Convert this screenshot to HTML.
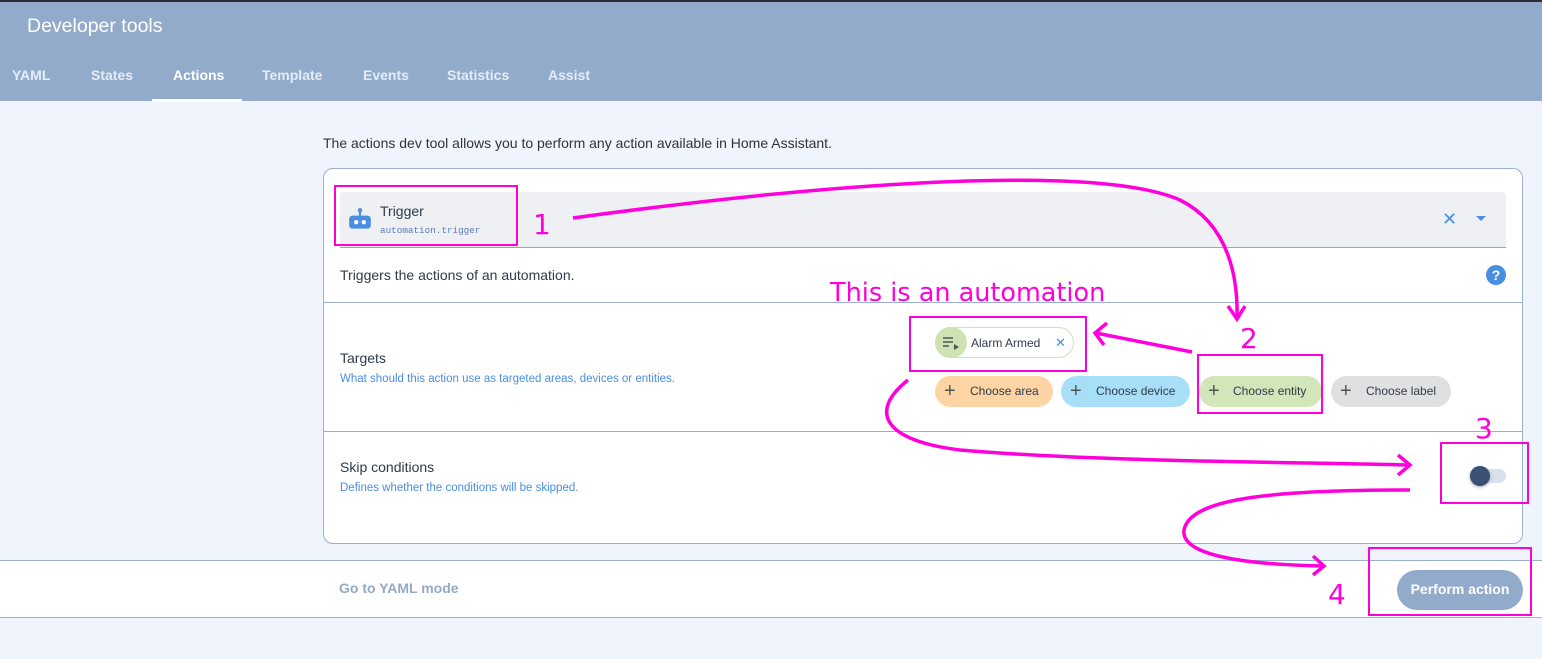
<!DOCTYPE html>
<html><head><meta charset="utf-8"><style>
*{margin:0;padding:0;box-sizing:border-box}
body{width:1542px;height:659px;position:relative;overflow:hidden;background:#eff4fd;font-family:"Liberation Sans",sans-serif;color:#2f3b4a}
.a{position:absolute;white-space:nowrap}
.hdr{position:absolute;left:0;top:0;width:1542px;height:101px;background:#92abcb;border-top:2px solid #2c2c33}
.tab{position:absolute;top:67px;font-size:14px;font-weight:bold;color:#e4ecf7}
.chip{position:absolute;height:31px;border-radius:16px;font-size:12px;color:#2f3b4a;line-height:31px}
.chip .p{position:absolute;left:9px;top:0;font-size:20px;color:#555;font-weight:normal}
</style></head><body>
<div class="hdr"></div>
<div class="a" style="left:27px;top:15px;font-size:19.5px;color:#fff">Developer tools</div>
<div class="tab" style="left:12px">YAML</div>
<div class="tab" style="left:91px">States</div>
<div class="tab" style="left:173px;color:#fff">Actions</div>
<div class="tab" style="left:262px">Template</div>
<div class="tab" style="left:363px">Events</div>
<div class="tab" style="left:447px">Statistics</div>
<div class="tab" style="left:548px">Assist</div>
<div class="a" style="left:152px;top:99px;width:90px;height:3px;background:#fff"></div>

<div class="a" style="left:323px;top:135px;font-size:14px;color:#333">The actions dev tool allows you to perform any action available in Home Assistant.</div>

<div class="a" style="left:323px;top:168px;width:1200px;height:376px;background:#fff;border:1px solid #9ab0cf;border-radius:10px"></div>
<div class="a" style="left:340px;top:192px;width:1166px;height:56px;background:#eef0f4;border-bottom:1px solid #8fa8c8;border-radius:4px 4px 0 0"></div>
<svg class="a" style="left:347px;top:207px" width="26" height="26" viewBox="0 0 24 24"><circle cx="12" cy="3" r="2" fill="#4a8ee0"/><rect x="11" y="3" width="2" height="5" fill="#4a8ee0"/><path d="M5 8h14a3 3 0 0 1 3 3v6a3 3 0 0 1-3 3H5a3 3 0 0 1-3-3v-6a3 3 0 0 1 3-3z" fill="#4a8ee0"/><circle cx="8.5" cy="14" r="2" fill="#fff"/><circle cx="15.5" cy="14" r="2" fill="#fff"/></svg>
<div class="a" style="left:380px;top:203px;font-size:14px">Trigger</div>
<div class="a" style="left:380px;top:225px;font-size:9.3px;font-family:'Liberation Mono',monospace;color:#5b7bb8">automation.trigger</div>
<div class="a" style="left:1442px;top:209px;font-size:18px;color:#4a8ee0">✕</div>
<svg class="a" style="left:1476px;top:216px" width="10" height="6"><path d="M0 0h10L5 5z" fill="#4a8ee0"/></svg>
<div class="a" style="left:340px;top:267px;font-size:14px">Triggers the actions of an automation.</div>
<div class="a" style="left:1486px;top:265px;width:20px;height:20px;border-radius:50%;background:#4a8ee0;color:#fff;font-size:14px;font-weight:bold;text-align:center;line-height:20px">?</div>
<div class="a" style="left:324px;top:302px;width:1198px;height:1px;background:#9ab0cf"></div>
<div class="a" style="left:340px;top:350px;font-size:14px">Targets</div>
<div class="a" style="left:340px;top:373px;font-size:11.5px;color:#4a8ee0">What should this action use as targeted areas, devices or entities.</div>

<div class="chip" style="left:935px;top:327px;width:139px;border:1px solid #cfe3b5;background:#fff"></div>
<div class="a" style="left:935px;top:327px;width:32px;height:31px;border-radius:16px;background:#cde3b3"></div>
<svg class="a" style="left:942px;top:336px" width="18" height="14"><path d="M1 2h10M1 6h10M1 10h6" stroke="#555" stroke-width="1.6"/><path d="M12 8l5 3-5 3z" fill="#555"/></svg>
<div class="a" style="left:971px;top:336px;font-size:12px">Alarm Armed</div>
<div class="a" style="left:1055px;top:335px;font-size:13px;color:#4a8ee0">✕</div>

<div class="chip" style="left:935px;top:376px;width:118px;background:#fdd5a5"><span class="p">+</span><span style="position:absolute;left:35px">Choose area</span></div>
<div class="chip" style="left:1061px;top:376px;width:129px;background:#a8dff8"><span class="p">+</span><span style="position:absolute;left:35px">Choose device</span></div>
<div class="chip" style="left:1199px;top:376px;width:123px;background:#d2e6b9"><span class="p">+</span><span style="position:absolute;left:34px">Choose entity</span></div>
<div class="chip" style="left:1331px;top:376px;width:120px;background:#e0e0e0"><span class="p">+</span><span style="position:absolute;left:35px">Choose label</span></div>

<div class="a" style="left:324px;top:431px;width:1198px;height:1px;background:#9ab0cf"></div>
<div class="a" style="left:340px;top:459px;font-size:14px">Skip conditions</div>
<div class="a" style="left:340px;top:482px;font-size:11.5px;color:#4a8ee0">Defines whether the conditions will be skipped.</div>
<div class="a" style="left:1478px;top:469px;width:28px;height:14px;border-radius:7px;background:#d9e1ec"></div>
<div class="a" style="left:1470px;top:466px;width:20px;height:20px;border-radius:50%;background:#3a5075;box-shadow:0 1px 3px rgba(0,0,0,.35)"></div>

<div class="a" style="left:0;top:560px;width:1542px;height:58px;background:#fff;border-top:1px solid #9ab0cf;border-bottom:1px solid #9ab0cf"></div>
<div class="a" style="left:339px;top:580px;font-size:14px;font-weight:bold;color:#94a9c7">Go to YAML mode</div>
<div class="a" style="left:1397px;top:570px;width:126px;height:40px;border-radius:20px;background:#92abcb;color:#fff;font-size:14px;font-weight:bold;text-align:center;line-height:38px">Perform action</div>

<svg class="a" style="left:0;top:0" width="1542" height="659">
<g fill="none" stroke="#ff00dd" stroke-width="2">
<rect x="335" y="186" width="182" height="59"/>
<rect x="910" y="317" width="176" height="54"/>
<rect x="1198" y="355" width="124" height="58"/>
<rect x="1441" y="443" width="87" height="60"/>
<rect x="1369" y="548" width="162" height="67"/>
</g>
<g fill="none" stroke="#ff00dd" stroke-width="3.5">
<path d="M573 218 C 850 180 1100 165 1180 200 C 1230 225 1238 280 1237 318"/>
<path d="M1228 306 L1237 319 L1245 306"/>
<path d="M1192 352 L1096 333"/>
<path d="M1107 323 L1095 333 L1104 345"/>
<path d="M908 380 C 870 410 880 440 960 450 C 1100 462 1300 462 1408 465"/>
<path d="M1398 455 L1410 465 L1398 475"/>
<path d="M1410 490 C 1280 490 1190 497 1184 530 C 1180 560 1270 565 1323 566"/>
<path d="M1313 556 L1324 566 L1313 575"/>
</g>
<g fill="#ff00dd" font-family="'DejaVu Sans',sans-serif">
<text x="533" y="234" font-size="28">1</text>
<text x="1240" y="348" font-size="28">2</text>
<text x="1475" y="438" font-size="28">3</text>
<text x="1328" y="604" font-size="28">4</text>
<text x="830" y="301" font-size="25.5">This is an automation</text>
</g>
</svg>
</body></html>
